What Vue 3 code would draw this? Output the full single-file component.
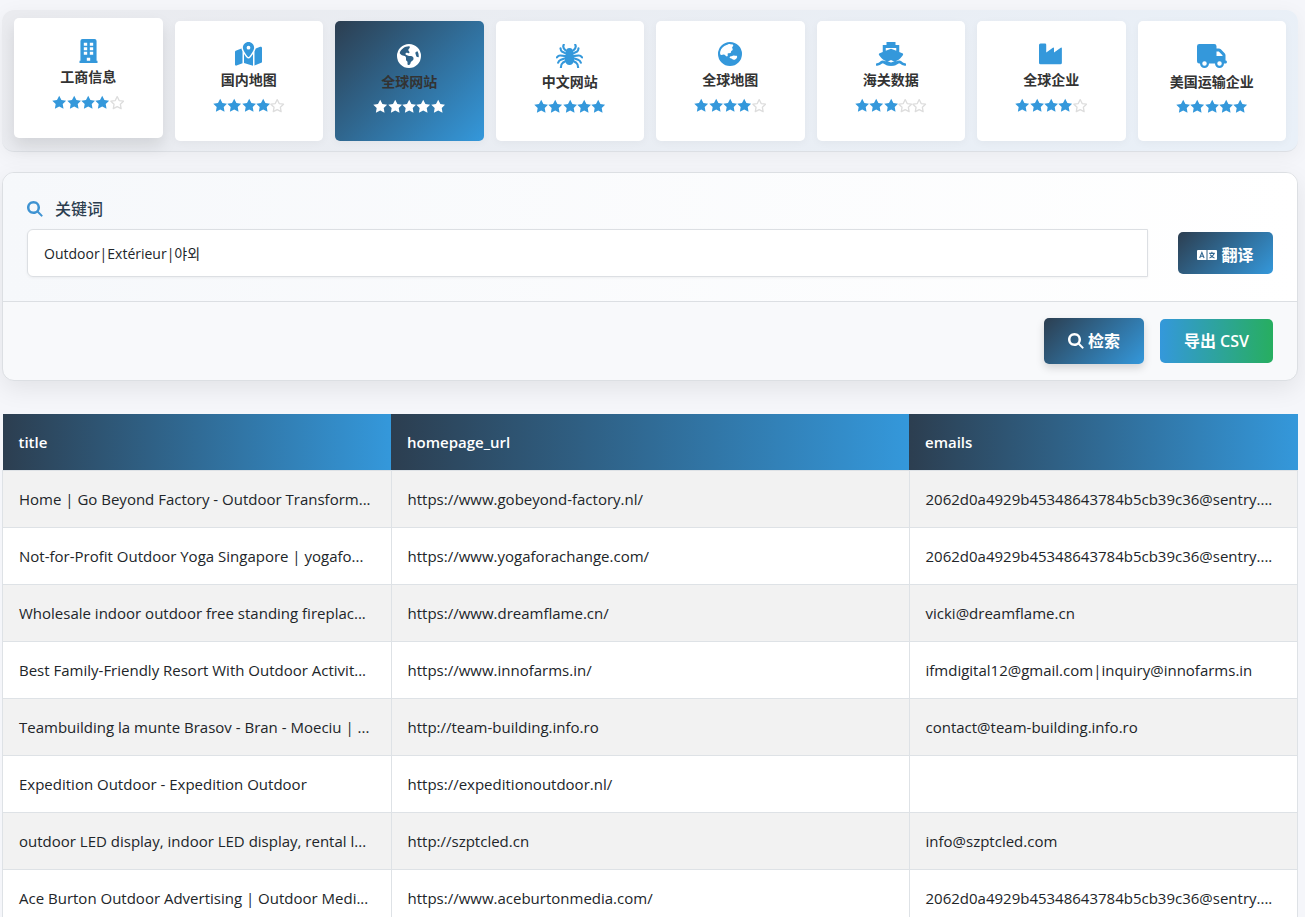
<script setup>
import { ref } from 'vue'

const icons = {
  building: {
    box: '0 0 384 512',
    paths: ['M64 0h256a44 44 0 0 1 44 44v420h20v48H0v-48h20V44A44 44 0 0 1 64 0zM92 80v64h72V80zm128 0v64h72V80zM92 176v64h72v-64zm128 0v64h72v-64zM92 272v64h72v-64zm128 0v64h72v-64zM156 400v64h72v-64z'],
  },
  map: {
    box: '0 0 576 512',
    paths: ['M408 120c0 54.600-73.100 151.900-105.200 192-7.700 9.600-22 9.600-29.600 0C241.100 271.900 168 174.600 168 120 168 53.700 221.700 0 288 0s120 53.700 120 120zM288 160a40 40 0 1 0 0-80 40 40 0 1 0 0 80zM425.600 179.800c6.100-12 11.600-24.100 16.100-35.900l1.400-3.700 93.100-37.200C554 95.800 576 108.800 576 128v294.800c0 9.800-6 18.600-15.100 22.300L416 503V200.400c3.500-6.900 6.700-13.800 9.600-20.600zM137.600 138.300c2.400 14.100 7.200 28.300 12.800 41.500 2.900 6.800 6.100 13.700 9.600 20.600v251.400L32.700 502.700C17 509 0 497.400 0 480.400V209.600c0-9.800 6-18.600 15.100-22.300zM327.800 332c13.900-17.400 35.700-45.700 56.200-77v249.300l-192-54.900V255c20.500 31.300 42.300 59.600 56.200 77 20.500 25.600 59.100 25.600 79.600 0z'],
  },
  earth: {
    box: '0 0 512 512',
    paths: ['M57.700 193l9.400 16.400c8.300 14.500 21.900 25.200 38 29.800l57.900 16.500c17.200 4.900 29 20.600 29 38.500v39.900c0 11 6.200 21 16 25.900s16 14.900 16 25.900v39c0 15.600 14.900 26.900 29.900 22.600 16.100-4.600 28.600-17.500 32.700-33.800l2.800-11.200c4.200-16.900 15.200-31.400 30.300-40l8.100-4.600c15-8.500 24.200-24.500 24.200-41.700v-8.300c0-12.700-5.100-24.900-14.100-33.900l-3.900-3.900c-9-9-21.200-14.100-33.900-14.100H257c-11.100 0-22.100-2.900-31.800-8.400l-34.500-19.700c-4.300-2.500-7.600-6.500-9.200-11.200-3.200-9.600 1.100-20 10.200-24.500l5.900-3c6.600-3.300 14.300-3.900 21.300-1.500l23.200 7.700c8.200 2.700 17.200-.4 21.900-7.500 4.700-7 4.200-16.300-1.200-22.800l-13.600-16.300c-10-12-9.900-29.500.3-41.300l15.700-18.300c8.800-10.300 10.200-25 3.500-36.700l-2.400-4.200c-3.500-.2-6.900-.3-10.400-.3C163.100 48 84.400 108.900 57.700 193zM464 256c0-36.800-9.600-71.400-26.400-101.500L412 164.800c-15.700 6.300-23.800 23.800-18.500 39.800l16.900 50.700c3.500 10.400 12 18.300 22.600 20.900l29.100 7.300c1.200-9 1.800-18.200 1.800-27.500zM0 256a256 256 0 1 1 512 0A256 256 0 1 1 0 256z'],
  },
  spider: {
    box: '0 0 576 512',
    lines: ['M218 205 L126 162 Q105 150 96 92', 'M214 260 L95 245 Q55 240 20 285', 'M215 300 L105 335 Q60 350 45 400', 'M230 350 L145 400 Q105 430 104 500', 'M358 205 L450 162 Q471 150 480 92', 'M362 260 L481 245 Q521 240 556 285', 'M361 300 L471 335 Q516 350 531 400', 'M346 350 L431 400 Q471 430 472 500', 'M165 14 Q132 80 205 134', 'M411 14 Q444 80 371 134'],
    paths: ['M288 85c48 0 78 36 78 78v58c16 32 22 74 18 120-5 64-43 108-96 108s-91-44-96-108c-4-46 2-88 18-120v-58c0-42 30-78 78-78z'],
  },
  asia: {
    box: '0 0 512 512',
    paths: ['M256 0a256 256 0 1 1 0 512 256 256 0 1 1 0-512zM181 65C117 84 65 136 48 202c-8 38-2 63 16 73 20 10 45-16 66-7 25 10 32 39 57 39 22 0 25-26 19-43-5-18 9-25 30-24 35 1 47-16 42-37-4-19 24-15 33-35 12-27-17-36-9-55 8-18 31-25 21-51-7-18-37-10-61-16-28-8-47 8-81 19zM288 302c-26 0-42 13-40 30 3 22 33 12 48 26 18 17 37 28 62 18 33-14 57-44 50-67-7-24-31-6-51-18-25-15-41 11-69 11z'],
  },
  ship: {
    box: '0 0 640 512',
    paths: ['M224 0h192v64h80v150l65 27c19 8 24 25 11 43-32 45-68 84-116 113-35 21-74 20-105 3-20-11-42-11-62 0-31 17-70 18-105-3-48-29-84-68-116-113-13-18-8-35 11-43l65-27V64h80zM208 128v60l112-44 112 44v-60z'],
    lines: ['M24 480 Q75 475 108 440 Q145 408 185 440 Q235 480 320 480 Q405 480 455 440 Q495 408 532 440 Q565 475 616 480'],
    lineWidth: 58,
    solid: 'M184 430q40-50 76-12 60 35 120 0 36-38 76 12-30 74-136 74t-136-74z',
  },
  factory: {
    box: '0 0 512 512',
    paths: ['M32 32h96q26 0 26 26v166l142-102q24-14 24 18v84l144-102q24-14 24 18v304q0 32-32 32H32q-32 0-32-32V64q0-32 32-32z'],
  },
  truck: {
    box: '0 0 640 512',
    paths: ['M48 0h320a48 48 0 0 1 48 48v48h50q24 0 42 18l82 82q18 18 18 44v112c18 0 32 14 32 32s-14 32-32 32h-32a96 96 0 0 1-192 0H256a96 96 0 0 1-192 0H48a48 48 0 0 1-48-48V48A48 48 0 0 1 48 0zM416 160v96h128v-16l-80-80zM160 368a48 48 0 1 0 0 96 48 48 0 1 0 0-96zm320 0a48 48 0 1 0 0 96 48 48 0 1 0 0-96z'],
  },
  search: {
    box: '0 0 512 512',
    paths: ['M416 208c0 45.900-14.900 88.300-40 122.700L498 452q12 12 0 24l-22 22q-12 12-24 0L330.700 376c-34.400 25.200-76.800 40-122.700 40C93.100 416 0 322.900 0 208S93.100 0 208 0s208 93.100 208 208zM208 336a128 128 0 1 0 0-256 128 128 0 1 0 0 256z'],
  },
}

const tabs = [
  { name: '工商信息', icon: 'building', stars: 4, size: 'narrow', state: 'raised' },
  { name: '国内地图', icon: 'map', stars: 4, size: 'medium' },
  { name: '全球网站', icon: 'earth', stars: 5, size: 'round', state: 'active', low: true },
  { name: '中文网站', icon: 'spider', stars: 5, size: 'medium', low: true },
  { name: '全球地图', icon: 'asia', stars: 4, size: 'round' },
  { name: '海关数据', icon: 'ship', stars: 3, size: 'wide' },
  { name: '全球企业', icon: 'factory', stars: 4, size: 'round' },
  { name: '美国运输企业', icon: 'truck', stars: 5, size: 'wide', low: true },
]

const keyword = ref('Outdoor|Extérieur|야외')

const rows = [
  ['Home | Go Beyond Factory - Outdoor Transform...', 'https://www.gobeyond-factory.nl/', '2062d0a4929b45348643784b5cb39c36@sentry....'],
  ['Not-for-Profit Outdoor Yoga Singapore | yogafo...', 'https://www.yogaforachange.com/', '2062d0a4929b45348643784b5cb39c36@sentry....'],
  ['Wholesale indoor outdoor free standing fireplac...', 'https://www.dreamflame.cn/', 'vicki@dreamflame.cn'],
  ['Best Family-Friendly Resort With Outdoor Activit...', 'https://www.innofarms.in/', 'ifmdigital12@gmail.com|inquiry@innofarms.in'],
  ['Teambuilding la munte Brasov - Bran - Moeciu | ...', 'http://team-building.info.ro', 'contact@team-building.info.ro'],
  ['Expedition Outdoor - Expedition Outdoor', 'https://expeditionoutdoor.nl/', ''],
  ['outdoor LED display, indoor LED display, rental l...', 'http://szptcled.cn', 'info@szptcled.com'],
  ['Ace Burton Outdoor Advertising | Outdoor Medi...', 'https://www.aceburtonmedia.com/', '2062d0a4929b45348643784b5cb39c36@sentry....'],
]
</script>

<template>
  <main class="page">
    <nav class="tabs">
      <button v-for="t in tabs" :key="t.name" type="button" class="tab" :class="[t.state, { low: t.low }]">
        <svg class="tab-icon" :class="t.size" :viewBox="icons[t.icon].box" aria-hidden="true">
          <path v-for="d in icons[t.icon].paths" :key="d" :d="d" fill="currentColor" fill-rule="evenodd" />
          <path v-for="d in icons[t.icon].lines" :key="d" :d="d" fill="none" stroke="currentColor" :stroke-width="icons[t.icon].lineWidth || 46" stroke-linecap="round" />
          <path v-if="icons[t.icon].solid" :d="icons[t.icon].solid" fill="currentColor" />
        </svg>
        <span class="tab-name">{{ t.name }}</span>
        <span class="stars">
          <svg v-for="n in 5" :key="n" viewBox="28 0 520 512" :class="{ empty: n > t.stars }" aria-hidden="true">
            <path :d="n > t.stars ? 'M288 42l70 143 158 23-114 111 27 157-141-74-141 74 27-157L60 208l158-23z' : 'M288 12l80 154 170 25-123 121 29 171-156-81-156 81 29-171L38 191l170-25z'" />
          </svg>
        </span>
      </button>
    </nav>

    <form class="search" @submit.prevent>
      <div class="search-body">
        <div class="field">
          <label for="keyword">
            <svg class="glyph" :viewBox="icons.search.box" aria-hidden="true"><path :d="icons.search.paths[0]" fill="currentColor" fill-rule="evenodd" /></svg>
            关键词
          </label>
          <input id="keyword" v-model="keyword" type="text">
        </div>
        <button type="button" class="btn translate">
          <svg class="language" viewBox="0 0 20 10" aria-hidden="true">
            <path fill="currentColor" fill-rule="evenodd" d="M1 0h8.500v10H1a1 1 0 0 1-1-1V1a1 1 0 0 1 1-1zM10.500 0H19a1 1 0 0 1 1 1v8a1 1 0 0 1-1 1h-8.500z" />
            <path fill="none" stroke="#2f6690" stroke-width="1.100" d="M2.700 8l2.200-5.600L7.100 8M3.500 6.200h2.800M14.900 1.800v1.400M12.200 3.400h5.600M17 3.600Q15.800 7 12.500 8M13.200 4.600Q14.800 7.300 17.500 8" />
          </svg>
          翻译
        </button>
      </div>
      <div class="actions">
        <button type="submit" class="btn find">
          <svg class="glyph" :viewBox="icons.search.box" aria-hidden="true"><path :d="icons.search.paths[0]" fill="currentColor" fill-rule="evenodd" /></svg>
          检索
        </button>
        <button type="button" class="btn export">导出 CSV</button>
      </div>
    </form>

    <table class="results">
      <colgroup><col class="c-side"><col class="c-main"><col class="c-side"></colgroup>
      <thead>
        <tr><th scope="col">title</th><th scope="col">homepage_url</th><th scope="col">emails</th></tr>
      </thead>
      <tbody>
        <tr v-for="r in rows" :key="r[1]"><td v-for="(c, i) in r" :key="i">{{ c }}</td></tr>
      </tbody>
    </table>
  </main>
</template>

<style>
html, body { height: 100%; }
body { margin: 0; background: #f5f6fa; overflow: hidden; }
</style>

<style scoped>
.page {
  box-sizing: border-box;
  padding: 10px 7px 0 2px;
  font-family: "Open Sans", "Noto Sans CJK SC", "Noto Sans CJK KR", sans-serif;
  font-size: 15px;
  color: #212529;
}
button, input { font-family: inherit; }
.tabs {
  display: grid;
  grid-template-columns: repeat(8, 1fr);
  gap: 12px;
  padding: 11px 12px 10px;
  border-bottom: 1px solid #dcdfe4;
  border-radius: 12px;
  background: linear-gradient(135deg, #eaebef, #e9f0f8);
  box-shadow: 0 4px 20px rgba(0, 0, 0, .05);
}
.tab {
  display: flex;
  flex-direction: column;
  align-items: center;
  height: 120px;
  padding: 20px 0 0;
  border: 1px solid transparent;
  border-radius: 5px;
  background: #fff;
  color: #3498db;
  box-shadow: 0 2px 8px rgba(0, 0, 0, .04);
}
.tab.low { padding-top: 22px; }
.tab.low .stars { margin-top: 6px; }
.tab.raised { margin: -3px 0 3px; box-shadow: 0 8px 16px rgba(0, 0, 0, .1); }
.tab.active {
  color: #fff;
  background: linear-gradient(135deg, #2c3e50, #3498db) border-box;
}
.tab-icon { height: 24px; flex: none; }
.narrow { width: 21px; }
.medium { width: 27px; }
.round { width: 24px; }
.wide { width: 30px; }
.tab-name {
  margin-top: 3px;
  font-size: 14px;
  line-height: 22px;
  font-weight: 700;
  color: #333;
}
.stars { display: flex; width: 72px; margin-top: 7px; }
.stars svg { flex: 1; min-width: 0; height: 15px; fill: currentColor; }
.stars .empty { fill: none; stroke: #ddd; stroke-width: 48px; stroke-linejoin: round; }
.search {
  margin-top: 20px;
  border: 1px solid #dcdfe3;
  border-radius: 12px;
  background: #f8f9fb;
  box-shadow: 0 8px 24px rgba(0, 0, 0, .08);
  overflow: hidden;
}
.search-body {
  display: flex;
  align-items: flex-end;
  gap: 30px;
  padding: 24px;
  background: linear-gradient(90deg, #f6f8fb, #fff);
  border-bottom: 1px solid #dcdfe3;
}
.field { flex: 1; }
.field label {
  display: flex;
  align-items: center;
  gap: 12px;
  margin-bottom: 8px;
  font-size: 16px;
  line-height: 24px;
  font-weight: 500;
  color: #2c3e50;
}
.glyph { width: 16px; height: 16px; flex: none; }
.field .glyph { color: #3f93d2; }
.field input {
  box-sizing: border-box;
  display: block;
  width: 100%;
  height: 48px;
  padding: 0 16px;
  border: 1px solid #dcdfe3;
  border-radius: 6px 0 0 6px;
  background: #fff;
  font-size: 14px;
  color: #212529;
  box-shadow: 0 1px 3px rgba(0, 0, 0, .05);
}
.btn {
  display: flex;
  align-items: center;
  justify-content: center;
  gap: 4px;
  border: 0;
  border-radius: 5px;
  padding: 0 24px;
  font-size: 16px;
  font-weight: 700;
  line-height: 24px;
  color: #fff;
  background: linear-gradient(135deg, #2c3e50, #3498db);
}
.translate { height: 42px; width: 95px; margin-bottom: 3px; padding: 4px 0 0; }
.language { width: 20px; height: 10px; }
.actions {
  display: flex;
  align-items: center;
  justify-content: flex-end;
  gap: 16px;
  padding: 16px 24px;
}
.find { height: 46px; box-shadow: 0 4px 8px rgba(0, 0, 0, .15); }
.export {
  height: 44px;
  font-weight: 600;
  background: linear-gradient(90deg, #3498db, #27ae60);
}
.results {
  width: 100%;
  margin-top: 33px;
  table-layout: fixed;
  border-collapse: collapse;
}
.c-side { width: 30%; }
.c-main { width: 40%; }
th {
  height: 56px;
  padding: 0 16px;
  box-sizing: border-box;
  text-align: left;
  font-weight: 600;
  color: #fff;
  background: linear-gradient(90deg, #2c3e50, #3498db);
}
td {
  height: 57px;
  padding: 0 16px;
  box-sizing: border-box;
  border: 1px solid #dee2e6;
  line-height: 24px;
  background: #fff;
  white-space: nowrap;
}
tbody tr:nth-child(odd) td { background: #f2f2f2; }
</style>
